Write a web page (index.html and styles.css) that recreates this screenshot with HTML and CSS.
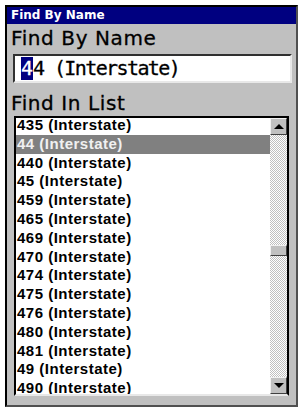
FILE: index.html
```html
<!DOCTYPE html>
<html lang="en">
<head>
    <meta charset="UTF-8">
    <title>Find By Name</title>
    <link rel="stylesheet" href="styles.css">
</head>
<body>
    <div class="window">
        <div class="titlebar">Find By Name</div>

        <div class="label label-top">Find By Name</div>
        <div class="entry"><span class="cursor">4</span>4 (Interstate)</div>

        <div class="label label-list">Find In List</div>
        <div class="listbox">
            <ul class="items">
                <li>435 (Interstate)</li>
                <li class="selected">44 (Interstate)</li>
                <li>440 (Interstate)</li>
                <li>45 (Interstate)</li>
                <li>459 (Interstate)</li>
                <li>465 (Interstate)</li>
                <li>469 (Interstate)</li>
                <li>470 (Interstate)</li>
                <li>474 (Interstate)</li>
                <li>475 (Interstate)</li>
                <li>476 (Interstate)</li>
                <li>480 (Interstate)</li>
                <li>481 (Interstate)</li>
                <li>49 (Interstate)</li>
                <li>490 (Interstate)</li>
            </ul>
            <div class="scrollbar">
                <div class="sb-btn sb-up"><span class="arrow-up"></span></div>
                <div class="sb-track">
                    <div class="sb-thumb"></div>
                </div>
                <div class="sb-btn sb-down"><span class="arrow-down"></span></div>
            </div>
        </div>
    </div>
</body>
</html>
```

FILE: styles.css
```css
body {
    margin: 0;
    background: #ffffff;
}
.window {
    margin: 5px 0 0 5px;
    width: 289px;
    height: 398px;
    border: 2px solid #000;
    border-right-color: #505050;
    border-bottom-color: #505050;
    background: #c0c0c0;
    display: flex;
    flex-direction: column;
}
.titlebar {
    height: 17px;
    line-height: 17px;
    padding-left: 4px;
    background: #000080;
    color: #fff;
    font-family: "DejaVu Sans", sans-serif;
    font-weight: bold;
    font-size: 12px;
}
.label {
    font-family: "DejaVu Sans", sans-serif;
    font-size: 20px;
    letter-spacing: 0.6px;
    -webkit-text-stroke: 0.3px #000;
    color: #000;
    padding-left: 4px;
    line-height: 22px;
}
.label-top {
    margin-top: 3px;
}
.label-list {
    margin-top: 9px;
}
.entry {
    margin: 5px 4px 0 6px;
    height: 25px;
    border: 2px solid #303030;
    border-right-color: #e8e8e8;
    border-bottom-color: #e8e8e8;
    background: #fff;
    font-family: "DejaVu Sans Mono", monospace;
    font-size: 20px;
    letter-spacing: -1.6px;
    -webkit-text-stroke: 0.3px #000;
    line-height: 25px;
    padding-left: 6px;
    color: #000;
    white-space: nowrap;
}
.cursor {
    display: inline-block;
    width: 12px;
    height: 23px;
    line-height: 23px;
    vertical-align: top;
    margin-top: 1px;
    letter-spacing: 0;
    text-align: center;
    background: #000080;
    color: #fff;
    -webkit-text-stroke: 0.3px #fff;
}
.listbox {
    margin: 2px 7px 0 7px;
    height: 276px;
    border: 2px solid #000;
    border-bottom-color: #e8e8e8;
    background: #fff;
    display: flex;
    overflow: hidden;
}
.items {
    list-style: none;
    margin: -2px 0 0 0;
    padding: 0;
    flex: 1;
    font-family: "Liberation Sans", Arial, sans-serif;
    font-weight: bold;
    font-size: 15px;
    letter-spacing: 0.5px;
}
.items li {
    height: 18.8px;
    line-height: 18.8px;
    padding-left: 1px;
    white-space: nowrap;
}
.items li.selected {
    background: #808080;
    color: #f0f0f0;
}
.scrollbar {
    width: 17px;
    display: flex;
    flex-direction: column;
}
.sb-btn {
    height: 15px;
    background: #c0c0c0;
    border: 1px solid #f0f0f0;
    border-right-color: #404040;
    border-bottom-color: #404040;
    display: flex;
    align-items: center;
    justify-content: center;
}
.arrow-up {
    width: 0;
    height: 0;
    border-left: 5px solid transparent;
    border-right: 5px solid transparent;
    border-bottom: 5px solid #000;
}
.arrow-down {
    width: 0;
    height: 0;
    border-left: 5px solid transparent;
    border-right: 5px solid transparent;
    border-top: 5px solid #000;
}
.sb-track {
    flex: 1;
    background: repeating-conic-gradient(#c0c0c0 0 25%, #ffffff 0 50%) 0 0 / 2px 2px;
    position: relative;
}
.sb-thumb {
    position: absolute;
    left: 0;
    right: 0;
    top: 110px;
    height: 9px;
    background: #c0c0c0;
    border: 1px solid #f0f0f0;
    border-right-color: #404040;
    border-bottom-color: #404040;
}
```
